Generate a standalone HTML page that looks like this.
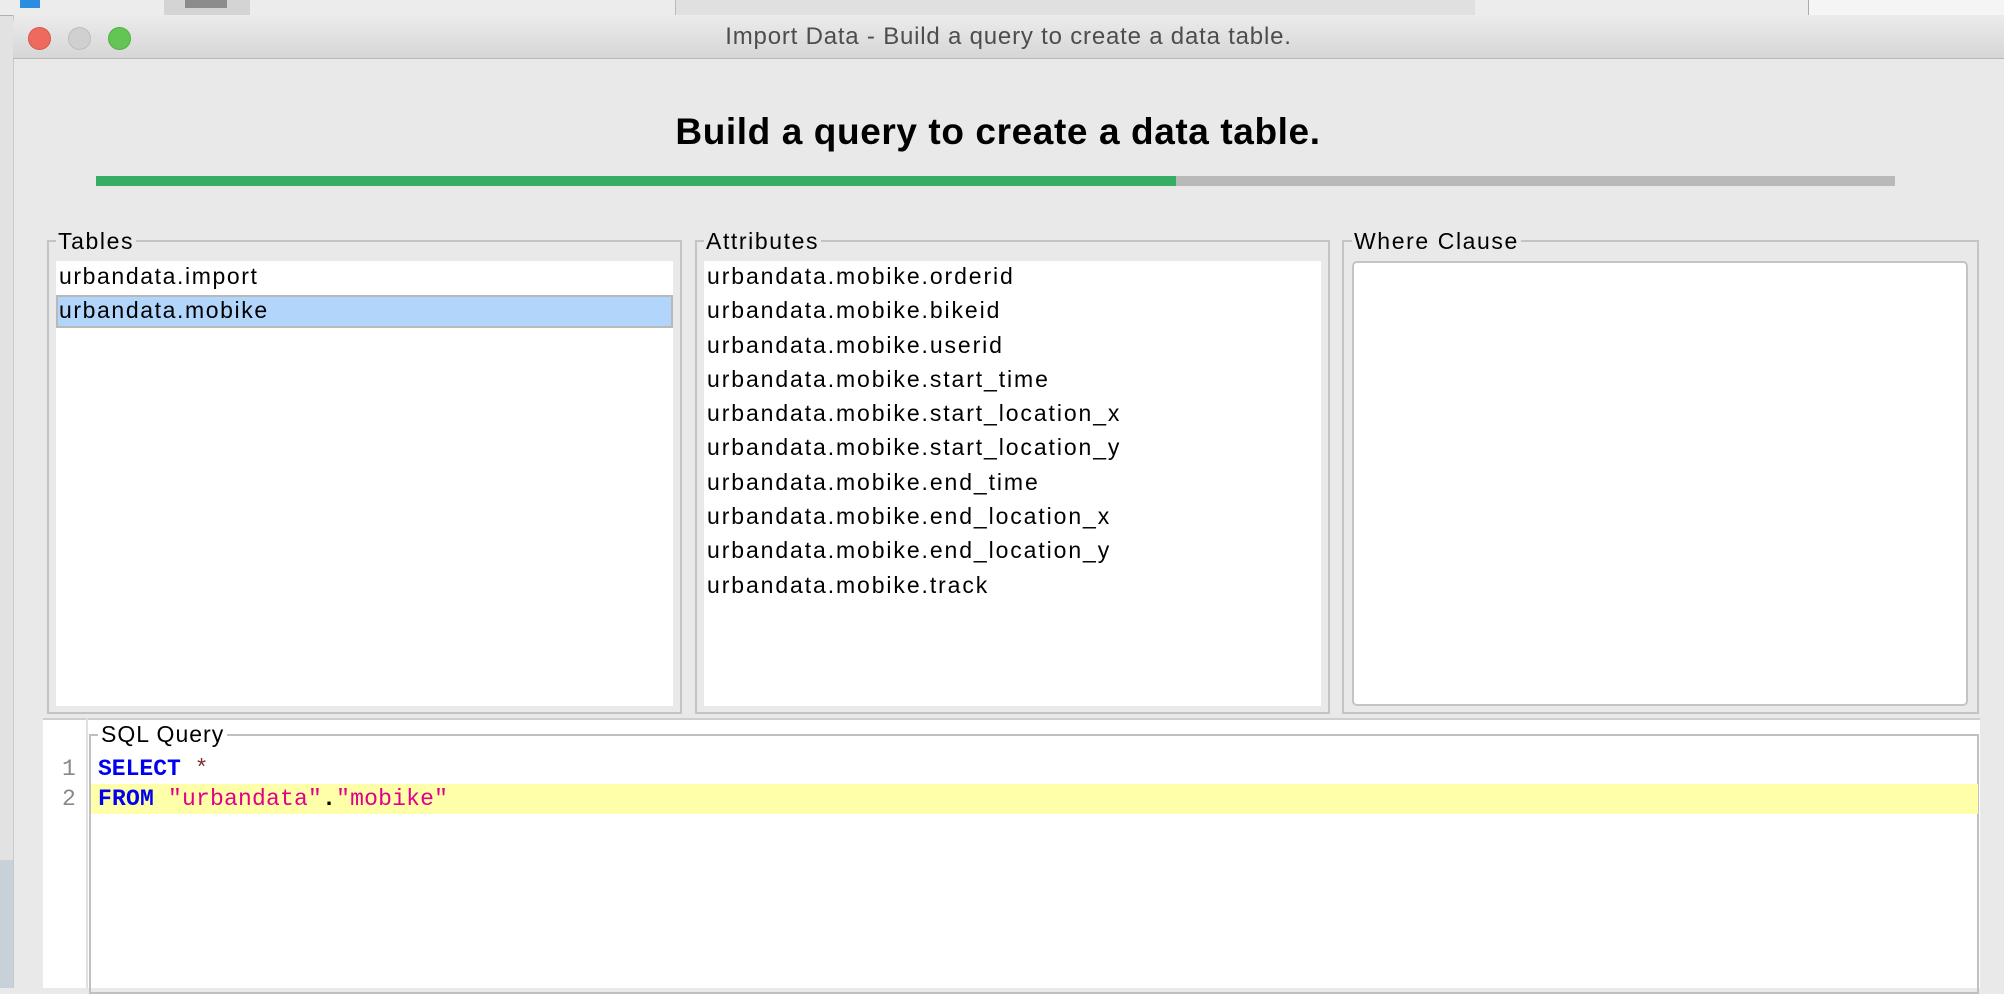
<!DOCTYPE html>
<html><head><meta charset="utf-8"><style>
*{margin:0;padding:0;box-sizing:border-box}
body{width:2004px;height:988px;overflow:hidden;background:#e8e9e8;position:relative;font-family:"Liberation Sans",sans-serif}
.a{position:absolute}
.t{font-size:23px;letter-spacing:1.6px;color:#000;white-space:nowrap}
.lbl{background:#e8e9e8;padding:0 2px}
.m{font-family:"Liberation Mono",monospace;font-size:23px;white-space:nowrap}
</style></head><body>
<div class="a" style="left:0;top:0;width:2004px;height:16px;background:#ececec;border-bottom:1px solid #b0b0b0"></div>
<div class="a" style="left:164px;top:0;width:86px;height:15px;background:#d4d4d4"></div>
<div class="a" style="left:185px;top:0;width:42px;height:8px;background:#8c8c8c"></div>
<div class="a" style="left:675px;top:0;width:800px;height:15px;background:#e0e0e0;border-left:1px solid #bbb"></div>
<div class="a" style="left:1808px;top:0;width:196px;height:15px;background:#f5f5f5;border-left:1px solid #aaa"></div>
<div class="a" style="left:20px;top:0;width:20px;height:8px;background:#2a8de0"></div>
<div class="a" style="left:0;top:16px;width:13px;height:972px;background:#e2e2e2"></div>
<div class="a" style="left:0;top:860px;width:13px;height:128px;background:#c8d0d8"></div>
<div class="a" style="left:13px;top:15px;width:1991px;height:973px;background:#e8e9e8;border-left:1px solid #c8c8c8"></div>
<div class="a" style="left:13px;top:15px;width:1991px;height:44px;background:linear-gradient(#ececec,#d6d6d6);border-bottom:1px solid #b8b8b8;border-radius:8px 0 0 0"></div>
<div class="a" style="left:28px;top:27px;width:23px;height:23px;border-radius:50%;background:#ee6a5e;border:1px solid #d6574b"></div>
<div class="a" style="left:68px;top:27px;width:23px;height:23px;border-radius:50%;background:#d0d0d0;border:1px solid #bdbdbd"></div>
<div class="a" style="left:108px;top:27px;width:23px;height:23px;border-radius:50%;background:#62c554;border:1px solid #52ad45"></div>
<div class="a" style="left:13px;top:23px;width:1991px;text-align:center;font-size:24px;color:#4d4d4d;letter-spacing:0.8px">Import Data - Build a query to create a data table.</div>
<div class="a" style="left:13px;top:111px;width:1970px;text-align:center;font-size:37px;font-weight:bold;color:#000;letter-spacing:0.6px">Build a query to create a data table.</div>
<div class="a" style="left:96px;top:176px;width:1799px;height:10px;background:#b9b9b9"></div>
<div class="a" style="left:96px;top:176px;width:1080px;height:10px;background:#35ad63"></div>
<div class="a" style="left:47px;top:240px;width:635px;height:474px;border:2px solid #c4c4c4"></div>
<div class="a t lbl" style="left:56px;top:228px">Tables</div>
<div class="a" style="left:56px;top:261px;width:617px;height:445px;background:#fff"></div>
<div class="a" style="left:56px;top:295px;width:617px;height:33px;background:#b2d6fb;border:2px solid #b9b9b9"></div>
<div class="a t" style="left:59px;top:263px">urbandata.import</div>
<div class="a t" style="left:59px;top:297px">urbandata.mobike</div>
<div class="a" style="left:695px;top:240px;width:635px;height:474px;border:2px solid #c4c4c4"></div>
<div class="a t lbl" style="left:704px;top:228px">Attributes</div>
<div class="a" style="left:704px;top:261px;width:617px;height:445px;background:#fff"></div>
<div class="a t" style="left:707px;top:259px;line-height:34.3px;letter-spacing:1.9px">urbandata.mobike.orderid<br>urbandata.mobike.bikeid<br>urbandata.mobike.userid<br>urbandata.mobike.start_time<br>urbandata.mobike.start_location_x<br>urbandata.mobike.start_location_y<br>urbandata.mobike.end_time<br>urbandata.mobike.end_location_x<br>urbandata.mobike.end_location_y<br>urbandata.mobike.track</div>
<div class="a" style="left:1342px;top:240px;width:637px;height:474px;border:2px solid #c4c4c4"></div>
<div class="a t lbl" style="left:1352px;top:228px">Where Clause</div>
<div class="a" style="left:1352px;top:261px;width:616px;height:445px;background:#fff;border:2px solid #c4c4c4;border-radius:5px"></div>
<div class="a" style="left:43px;top:718px;width:1937px;height:270px;background:#fff;border-top:2px solid #cfcfcf"></div>
<div class="a" style="left:86px;top:718px;width:2px;height:270px;background:#e0e0e0"></div>
<div class="a" style="left:89px;top:734px;width:1890px;height:260px;border:2px solid #c0c0c0"></div>
<div class="a t" style="left:98px;top:721px;background:#fff;padding:0 3px;letter-spacing:1px">SQL Query</div>
<div class="a" style="left:91px;top:784px;width:1887px;height:30px;background:#ffffaa"></div>
<div class="a m" style="left:62px;top:756px;color:#888">1</div>
<div class="a m" style="left:62px;top:786px;color:#888">2</div>
<div class="a m" style="left:98px;top:756px"><b style="color:#0000ee">SELECT</b> <span style="color:#7a3030">*</span></div>
<div class="a m" style="left:98px;top:786px;letter-spacing:0.2px"><b style="color:#0000ee">FROM</b> <span style="color:#e0008a">"urbandata"</span><b>.</b><span style="color:#e0008a">"mobike"</span></div>
</body></html>
